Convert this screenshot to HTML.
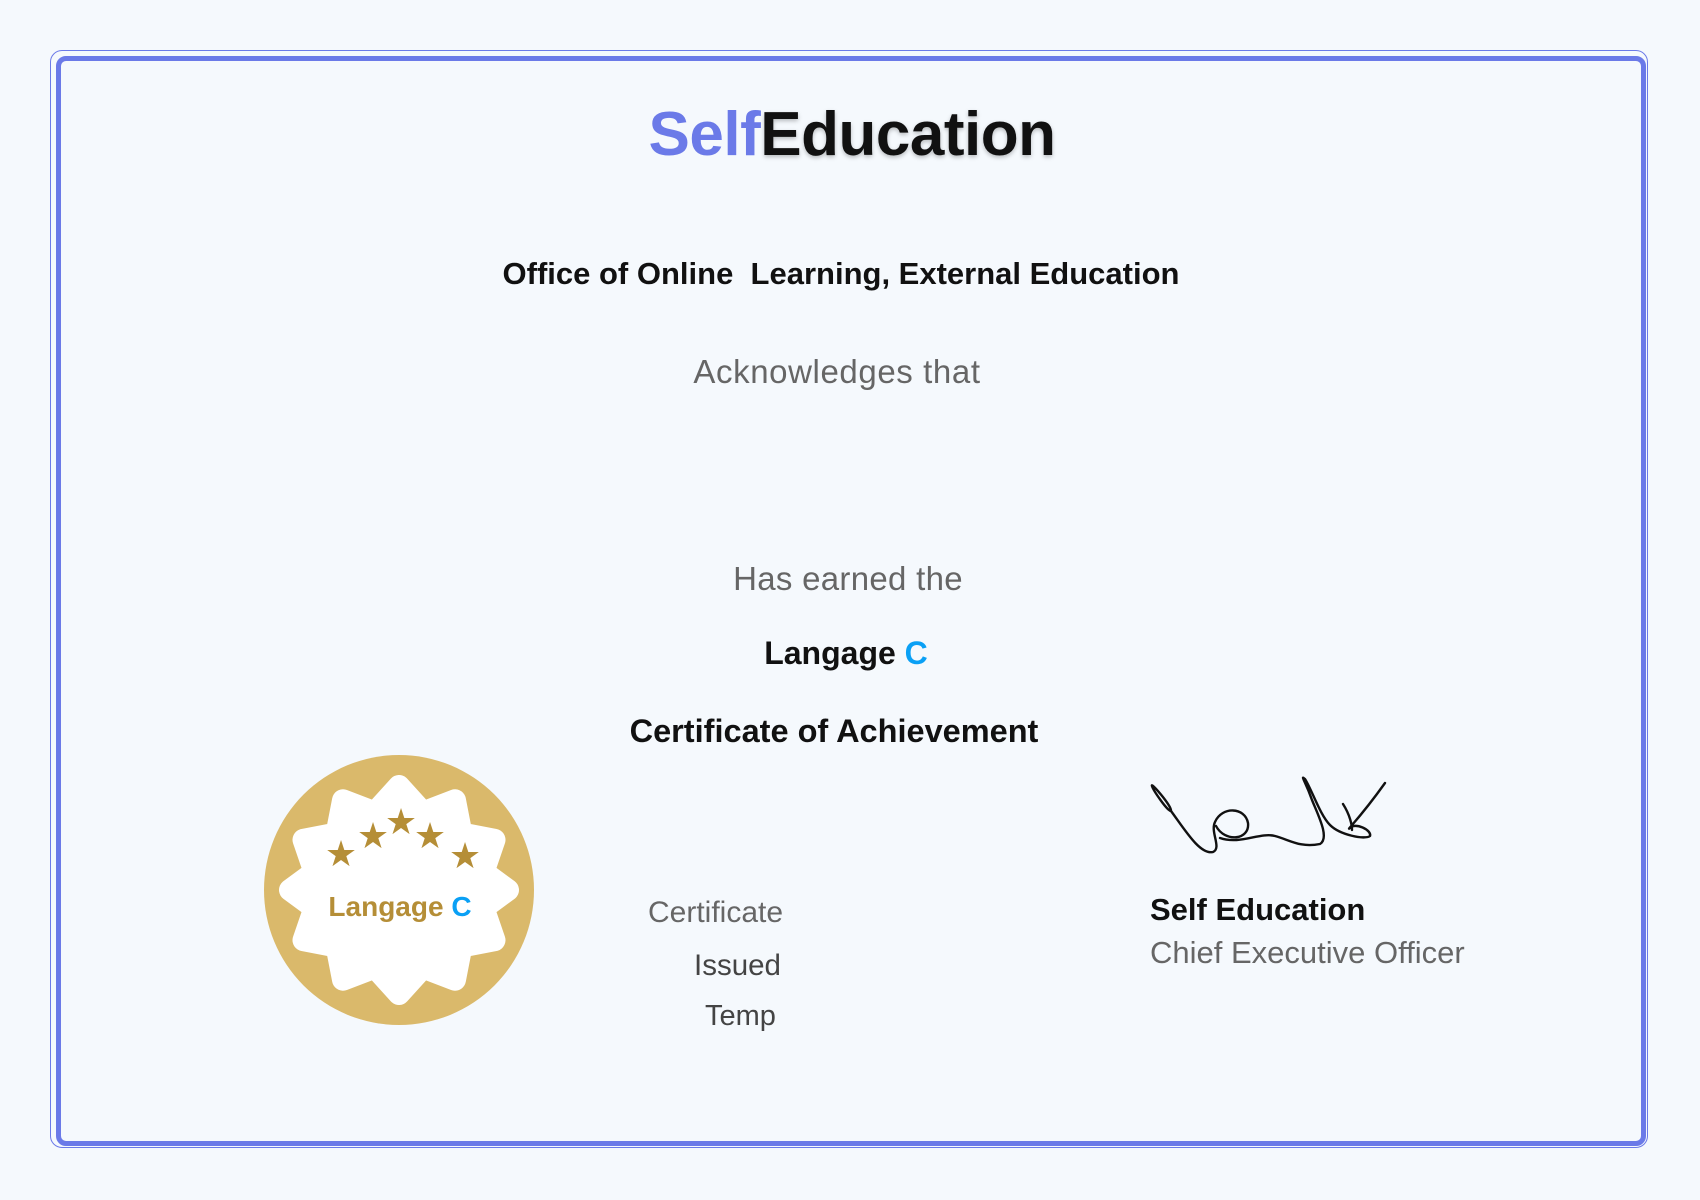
<!DOCTYPE html>
<html><head><meta charset="utf-8"><style>
html,body{margin:0;padding:0;}
body{width:1700px;height:1200px;background:#f5f9fd;position:relative;overflow:hidden;font-family:"Liberation Sans",sans-serif;}
.outer{position:absolute;left:50px;top:50px;width:1598px;height:1098px;border:1.5px solid #6b7ae8;border-radius:12px;box-sizing:border-box;}
.inner{position:absolute;left:56px;top:56px;width:1590px;height:1090px;border:5px solid #6b7ae8;border-radius:10px;box-sizing:border-box;}
.t{position:absolute;left:0;width:1700px;text-align:center;white-space:nowrap;}
</style></head><body>
<div class="outer"></div><div class="inner"></div>
<div class="t" style="top:99px;left:2px;font-size:62px;font-weight:bold;letter-spacing:-0.5px;"><span style="color:#6b7ae8">Self</span><span style="color:#111;text-shadow:0 2px 4px rgba(0,0,0,0.25)">Education</span></div>
<div class="t" style="top:256px;left:-9px;font-size:31px;font-weight:bold;color:#111;">Office of Online&nbsp; Learning, External Education</div>
<div class="t" style="top:353px;left:-13px;font-size:33px;color:#666;letter-spacing:0.6px;">Acknowledges that</div>
<div class="t" style="top:560px;left:-2px;font-size:33px;color:#666;letter-spacing:0.3px;">Has earned the</div>
<div class="t" style="top:635px;left:-4px;font-size:32px;font-weight:bold;color:#111;">Langage <span style="color:#0aa0f5">C</span></div>
<div class="t" style="top:713px;left:-16px;font-size:32.5px;font-weight:bold;color:#111;">Certificate of Achievement</div>
<svg style="position:absolute;left:0;top:0" width="1700" height="1200">
<circle cx="399" cy="890" r="135" fill="#dab96b"/>
<polygon fill="#fff" stroke="#fff" stroke-width="22" stroke-linejoin="round" points="
399.0,786.0 423.0,812.5 455.0,800.3 461.4,833.4 494.5,839.8 483.5,872.0 508.0,890.0 483.5,908.0 494.5,940.2 461.4,946.6 455.0,979.7 423.0,967.5 399.0,994.0 375.0,967.5 343.0,979.7 336.6,946.6 303.5,940.2 314.5,908.0 290.0,890.0 314.5,872.0 303.5,839.8 336.6,833.4 343.0,800.3 375.0,812.5"/>
<g fill="#b58e37" font-family="DejaVu Sans" font-size="36" text-anchor="middle">
<text x="341" y="866">★</text><text x="373" y="848">★</text><text x="401" y="834">★</text><text x="430" y="848">★</text><text x="465" y="868">★</text>
</g>
<text x="400" y="916" text-anchor="middle" font-family="Liberation Sans" font-weight="bold" font-size="28" fill="#b58e37">Langage <tspan fill="#0aa0f5">C</tspan></text>
<path fill="none" stroke="#111" stroke-width="2.4" stroke-linecap="round" d="M1152,786 C1150,781 1172,806 1171,811 C1168,812 1153,790 1152,786 M1171,811 C1185,830 1200,855 1213,852 C1222,848 1210,832 1215,822 C1222,806 1245,807 1248,823 C1250,840 1225,843 1216,826 M1220,838 C1240,845 1260,832 1275,836 C1290,840 1300,848 1320,844 C1330,838 1318,815 1312,800 C1305,780 1300,775 1305,779 C1312,790 1320,815 1330,825 C1340,835 1365,840 1370,836 C1372,830 1355,822 1350,828 C1345,832 1360,818 1385,783 M1343,804 C1350,815 1352,825 1352,830"/>
</svg>
<div style="position:absolute;left:648px;top:896px;font-size:30px;color:#666;">Certificate</div>
<div style="position:absolute;left:694px;top:949px;font-size:29.5px;color:#444;">Issued</div>
<div style="position:absolute;left:705px;top:1000px;font-size:29px;color:#444;">Temp</div>
<div style="position:absolute;left:1150px;top:892px;font-size:31px;font-weight:bold;color:#111;">Self Education</div>
<div style="position:absolute;left:1150px;top:935px;font-size:31px;color:#666;">Chief Executive Officer</div>
</body></html>
